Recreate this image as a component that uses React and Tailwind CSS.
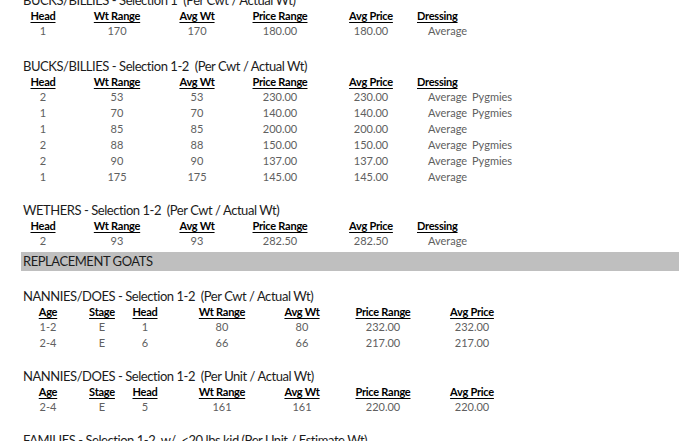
const topCols = 'grid grid-cols-[40px_108px_52px_114px_68px_1fr]'
const nanCols = 'grid grid-cols-[50px_58px_28px_126px_34px_128px_50px]'

const bucks1 = [['1', '170', '170', '180.00', '180.00', 'Average', '']]

const bucks2 = [
  ['2', '53', '53', '230.00', '230.00', 'Average', 'Pygmies'],
  ['1', '70', '70', '140.00', '140.00', 'Average', 'Pygmies'],
  ['1', '85', '85', '200.00', '200.00', 'Average', ''],
  ['2', '88', '88', '150.00', '150.00', 'Average', 'Pygmies'],
  ['2', '90', '90', '137.00', '137.00', 'Average', 'Pygmies'],
  ['1', '175', '175', '145.00', '145.00', 'Average', ''],
]

const wethers = [['2', '93', '93', '282.50', '282.50', 'Average', '']]

const nannies1 = [
  ['1-2', 'E', '1', '80', '80', '232.00', '232.00'],
  ['2-4', 'E', '6', '66', '66', '217.00', '217.00'],
]

const nannies2 = [['2-4', 'E', '5', '161', '161', '220.00', '220.00']]

function C({ children, head }) {
  return (
    <div className="flex justify-center whitespace-nowrap">
      {head ? <span className="font-bold text-black underline underline-offset-[2px] decoration-1 tracking-[-0.25px]">{children}</span> : children}
    </div>
  )
}

function Title({ children, className = '' }) {
  return (
    <div className={`h-[15px] leading-[15px] text-[13px] tracking-[-0.45px] text-[#1c1c1c] whitespace-pre ${className}`}>{children}</div>
  )
}

function TopTable({ rows }) {
  return (
    <div className="text-[11px]">
      <div className={`${topCols} h-[15px] leading-[15px]`}>
        <C head>Head</C>
        <C head>Wt Range</C>
        <C head>Avg Wt</C>
        <C head>Price Range</C>
        <C head>Avg Price</C>
        <div className="pl-[12px] font-bold text-black underline underline-offset-[2px] tracking-[-0.25px]">Dressing</div>
      </div>
      {rows.map((r, i) => (
        <div key={i} className={`${topCols} h-[16px] leading-[16px] text-[#606060]`}>
          <C>{r[0]}</C>
          <C>{r[1]}</C>
          <C>{r[2]}</C>
          <C>{r[3]}</C>
          <C>{r[4]}</C>
          <div className="pl-[23px] flex whitespace-nowrap">
            <span className="w-[44px] shrink-0">{r[5]}</span>
            <span>{r[6]}</span>
          </div>
        </div>
      ))}
    </div>
  )
}

function NanTable({ rows }) {
  return (
    <div className="text-[11px]">
      <div className={`${nanCols} h-[15px] leading-[15px]`}>
        {['Age', 'Stage', 'Head', 'Wt Range', 'Avg Wt', 'Price Range', 'Avg Price'].map(h => (
          <C head key={h}>{h}</C>
        ))}
      </div>
      {rows.map((r, i) => (
        <div key={i} className={`${nanCols} h-[16px] leading-[16px] text-[#606060]`}>
          {r.map((v, j) => <C key={j}>{v}</C>)}
        </div>
      ))}
    </div>
  )
}

export default function App() {
  return (
    <div className="w-[700px] h-[441px] overflow-hidden bg-white font-['Lato','Liberation_Sans',sans-serif]">
      <div className="pl-[23px] w-[679px]">
        <Title className="-mt-[7px]">BUCKS/BILLIES - Selection 1  (Per Cwt / Actual Wt)</Title>
        <TopTable rows={bucks1} />

        <Title className="mt-[20px]">BUCKS/BILLIES - Selection 1-2  (Per Cwt / Actual Wt)</Title>
        <TopTable rows={bucks2} />

        <Title className="mt-[18px]">WETHERS - Selection 1-2  (Per Cwt / Actual Wt)</Title>
        <TopTable rows={wethers} />

        <div className="mt-[3px] -ml-[2px] h-[19px] leading-[19px] bg-[#bfbfbf] pl-[2px] text-[13px] tracking-[-0.45px] text-[#1c1c1c]">
          REPLACEMENT GOATS
        </div>

        <Title className="mt-[18px]">NANNIES/DOES - Selection 1-2  (Per Cwt / Actual Wt)</Title>
        <NanTable rows={nannies1} />

        <Title className="mt-[18px]">NANNIES/DOES - Selection 1-2  (Per Unit / Actual Wt)</Title>
        <NanTable rows={nannies2} />

        <Title className="mt-[18px]">FAMILIES - Selection 1-2  w/  &lt;20 lbs kid (Per Unit / Estimate Wt)</Title>
      </div>
    </div>
  )
}
